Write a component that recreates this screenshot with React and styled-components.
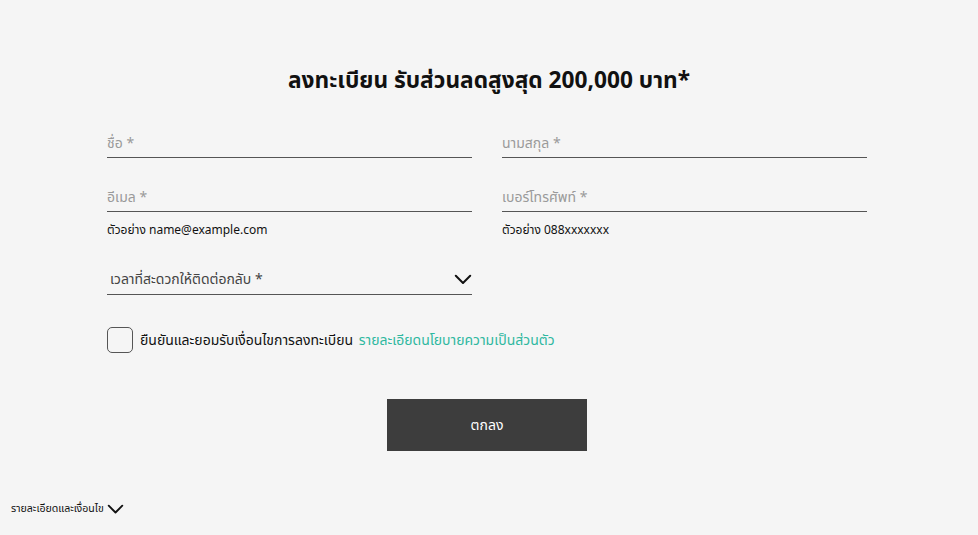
import React, { useState } from 'react';
import styled, { createGlobalStyle } from 'styled-components';

const GlobalStyle = createGlobalStyle`
    html, body {
        margin: 0;
        padding: 0;
        background: #f5f5f5;
        font-family: "Noto Sans", "Noto Sans Thai", "DejaVu Sans", sans-serif;
        color: #111;
    }
`;

const Page = styled.div`
    width: 978px;
    height: 535px;
    display: flex;
    flex-direction: column;
    background: #f5f5f5;
`;

const Title = styled.h1`
    margin: 64px 0 0 0;
    text-align: center;
    font-size: 22.7px;
    font-weight: 700;
    line-height: 32px;
    color: #111;
`;

const Form = styled.form`
    width: 760px;
    margin: 31px 0 0 107px;
    display: grid;
    grid-template-columns: 365px 365px;
    column-gap: 30px;
`;

const Field = styled.div`
    display: flex;
    flex-direction: column;
    height: ${({ tall }) => tall ? '83px' : '54px'};
`;

const Input = styled.input`
    border: none;
    border-bottom: 1px solid #555;
    background: transparent;
    outline: none;
    height: 30px;
    padding: 0;
    font-family: inherit;
    font-size: 14px;
    color: #111;
    &::placeholder {
        color: #9a9a9a;
    }
`;

const Hint = styled.span`
    margin-top: 9px;
    font-size: 12px;
    color: #111;
`;

const SelectBox = styled.div`
    grid-column: 1;
    height: 30px;
    border-bottom: 1px solid #555;
    display: flex;
    align-items: center;
    justify-content: space-between;
    padding: 0 0 0 3px;
    font-size: 14px;
    color: #444;
    cursor: pointer;
`;

const Agree = styled.label`
    grid-column: 1 / span 2;
    margin-top: 32px;
    display: flex;
    align-items: center;
    gap: 7px;
    font-size: 14px;
    cursor: pointer;
`;

const Check = styled.span`
    width: 24px;
    height: 24px;
    border: 1px solid #555;
    border-radius: 5px;
    background: ${({ checked }) => checked ? '#3d3d3d' : 'transparent'};
`;

const Link = styled.a`
    color: #2fb8a0;
    text-decoration: none;
    margin-left: 2px;
`;

const Actions = styled.div`
    grid-column: 1 / span 2;
    display: flex;
    justify-content: center;
    margin-top: 46px;
`;

const Submit = styled.button`
    width: 200px;
    height: 52px;
    border: none;
    background: #3d3d3d;
    color: #fff;
    font-family: inherit;
    font-size: 14px;
    cursor: pointer;
`;

const Footer = styled.div`
    margin: 50px 0 0 11px;
    display: flex;
    align-items: center;
    gap: 3px;
    font-size: 10.6px;
    color: #111;
`;

const Chevron = ({ size = 18 }) => (
    <svg width={size} height={size * 0.6} viewBox="0 0 20 12" fill="none">
        <path d="M2 2l8 8 8-8" stroke="#111" strokeWidth="2.2" strokeLinecap="round" strokeLinejoin="round" />
    </svg>
);

export default function App() {
    const [checked, setChecked] = useState(false);
    return (
        <Page>
            <GlobalStyle />
            <Title>ลงทะเบียน รับส่วนลดสูงสุด 200,000 บาท*</Title>
            <Form onSubmit={(e) => e.preventDefault()}>
                <Field>
                    <Input placeholder="ชื่อ *" />
                </Field>
                <Field>
                    <Input placeholder="นามสกุล *" />
                </Field>
                <Field tall>
                    <Input placeholder="อีเมล *" />
                    <Hint>ตัวอย่าง name@example.com</Hint>
                </Field>
                <Field tall>
                    <Input placeholder="เบอร์โทรศัพท์ *" />
                    <Hint>ตัวอย่าง 088xxxxxxx</Hint>
                </Field>
                <SelectBox>
                    <span>เวลาที่สะดวกให้ติดต่อกลับ *</span>
                    <Chevron />
                </SelectBox>
                <Agree onClick={() => setChecked(!checked)}>
                    <Check checked={checked} />
                    <span>
                        ยืนยันและยอมรับเงื่อนไขการลงทะเบียน
                        <Link href="#"> รายละเอียดนโยบายความเป็นส่วนตัว</Link>
                    </span>
                </Agree>
                <Actions>
                    <Submit type="submit">ตกลง</Submit>
                </Actions>
            </Form>
            <Footer>
                รายละเอียดและเงื่อนไข
                <Chevron size={17} />
            </Footer>
        </Page>
    );
}
